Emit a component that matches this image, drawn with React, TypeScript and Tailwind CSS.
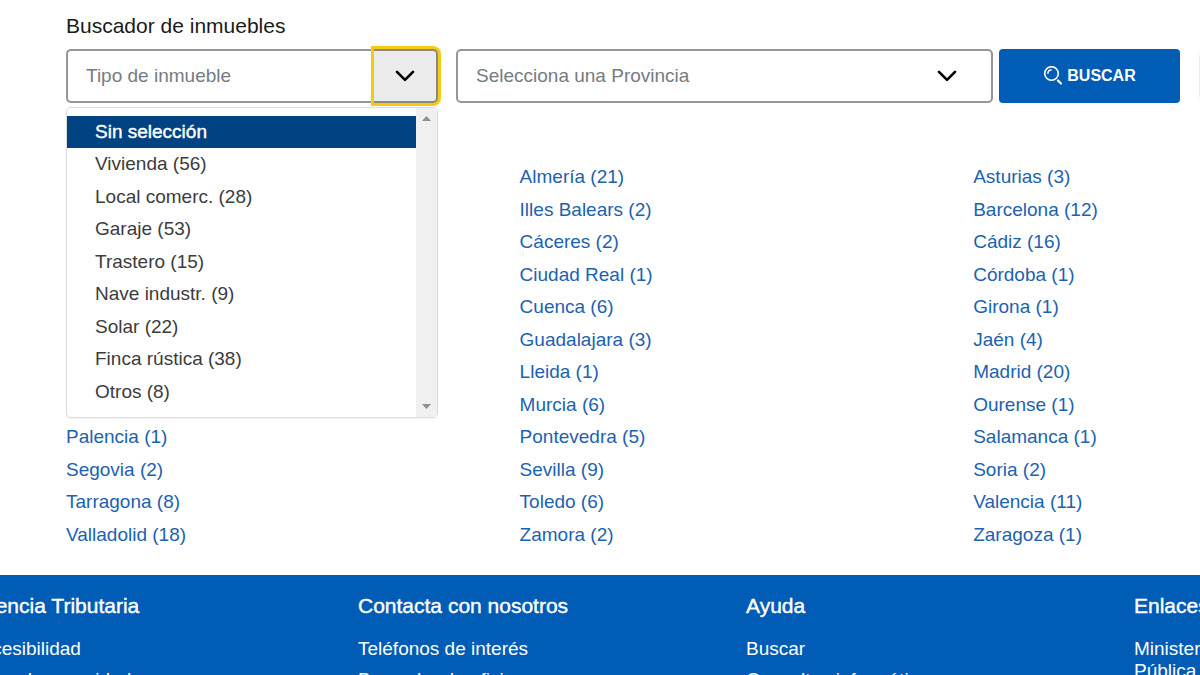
const tipos = [
	"Sin selección",
	"Vivienda (56)",
	"Local comerc. (28)",
	"Garaje (53)",
	"Trastero (15)",
	"Nave industr. (9)",
	"Solar (22)",
	"Finca rústica (38)",
	"Otros (8)",
]

// the first column only fills the rows below the open list
const provincias = [
	{
		className: "grid auto-rows-fr h-[130px] self-end",
		items: ["Palencia (1)", "Segovia (2)", "Tarragona (8)", "Valladolid (18)"],
	},
	{
		className: "grid auto-rows-fr",
		items: [
			"Almería (21)",
			"Illes Balears (2)",
			"Cáceres (2)",
			"Ciudad Real (1)",
			"Cuenca (6)",
			"Guadalajara (3)",
			"Lleida (1)",
			"Murcia (6)",
			"Pontevedra (5)",
			"Sevilla (9)",
			"Toledo (6)",
			"Zamora (2)",
		],
	},
	{
		className: "grid auto-rows-fr",
		items: [
			"Asturias (3)",
			"Barcelona (12)",
			"Cádiz (16)",
			"Córdoba (1)",
			"Girona (1)",
			"Jaén (4)",
			"Madrid (20)",
			"Ourense (1)",
			"Salamanca (1)",
			"Soria (2)",
			"Valencia (11)",
			"Zaragoza (1)",
		],
	},
]

const footer = [
	{ title: "Agencia Tributaria", links: ["Accesibilidad", "Aviso de seguridad"] },
	{ title: "Contacta con nosotros", links: ["Teléfonos de interés", "Buscador de oficinas"] },
	{ title: "Ayuda", links: ["Buscar", "Consultas informáticas"] },
	{ title: "Enlaces", links: ["Ministerio Pública"] },
]

function Chevron() {
	return (
		<svg className="w-5 h-3" viewBox="0 0 20 12" fill="none" stroke="#000" strokeWidth="2.6" strokeLinecap="round" strokeLinejoin="round">
			<path d="M2 1.8l8 8 8-8" />
		</svg>
	)
}

function SearchIcon() {
	return (
		<svg className="w-5 h-5" viewBox="0 0 20 20" fill="none" stroke="currentColor" strokeLinecap="round">
			<circle cx="8.5" cy="7.5" r="6.8" strokeWidth="1.6" />
			<path d="M4.9 7.3a3.6 3.6 0 0 1 3.4-3.4" strokeWidth="1.4" />
			<path d="M15 14.500l3 3" strokeWidth="2.2" />
		</svg>
	)
}

function TipoInmueble() {
	return (
		<div className="relative w-[372px] shrink-0">
			<div className="flex h-[54px]">
				<input
					id="tipo"
					type="text"
					placeholder="Tipo de inmueble"
					className="min-w-0 flex-1 rounded-l-[5px] border-2 border-r-0 border-[#969696] pl-[18px] text-[19px] placeholder:text-[#757b82] outline-none"
				/>
				<button
					type="button"
					aria-label="Mostrar tipos"
					className="flex w-16 items-center justify-center rounded-r-[5px] border-2 border-l-0 border-[#8a8a80] bg-[#ebebeb] ring-3 ring-[#f5c914]"
				>
					<Chevron />
				</button>
			</div>
			<div className="absolute top-full left-0 z-10 mt-1 flex w-full rounded-[5px] border border-[#dcdcdc] bg-white shadow-xs">
				<ul
					role="listbox"
					aria-label="Tipo de inmueble"
					className="grid h-[309px] flex-1 auto-rows-fr pt-2 pb-[9px] text-[19px] text-[#3c3c3c]"
				>
					{tipos.map((tipo, i) => (
						<li
							key={tipo}
							role="option"
							aria-selected={i === 0}
							className="flex items-center pl-7 aria-selected:bg-[#004282] aria-selected:text-white aria-selected:[-webkit-text-stroke:0.4px]"
						>
							{tipo}
						</li>
					))}
				</ul>
				<div className="flex w-[21px] flex-col items-center justify-between bg-[#f0f0f0] py-2">
					<svg className="h-[5px] w-[9px]" viewBox="0 0 9 5" fill="#8f8f8f">
						<path d="M0 5L4.500 0L9 5z" />
					</svg>
					<svg className="h-[5px] w-[9px]" viewBox="0 0 9 5" fill="#8f8f8f">
						<path d="M0 0L4.500 5L9 0z" />
					</svg>
				</div>
			</div>
		</div>
	)
}

export default function App() {
	return (
		<div className="overflow-hidden bg-white font-['Liberation_Sans',Arial,sans-serif]">
			<main className="pt-3 pl-[66px]">
				<label htmlFor="tipo" className="block text-[21px] leading-7 text-[#1a1a1a]">
					Buscador de inmuebles
				</label>
				<form className="mt-[9px] flex">
					<TipoInmueble />
					<div className="relative ml-[18px] flex-1">
						<select
							aria-label="Provincia"
							className="h-[54px] w-full appearance-none rounded-[5px] border-2 border-[#969696] bg-white pl-[18px] text-[19px] text-[#757b82]"
						>
							<option>Selecciona una Provincia</option>
						</select>
						<div className="pointer-events-none absolute inset-y-0 right-9 flex items-center">
							<Chevron />
						</div>
					</div>
					<button
						type="button"
						className="ml-1.5 flex h-[54px] w-[181px] items-center justify-center gap-1 rounded-[4px] bg-[#005cb5] text-[16px] font-bold text-white"
					>
						<SearchIcon />
						BUSCAR
					</button>
					<div className="my-1.5 ml-[19px] w-px bg-[#ececec]" />
				</form>
				<div className="mt-[58px] grid min-h-[390px] grid-cols-[2fr_2fr_1fr] text-[19px] leading-8 text-[#1c62b0]">
					{provincias.map((col, c) => (
						<ul key={c} className={col.className}>
							{col.items.map(item => (
								<li key={item}>
									<a href="#">{item}</a>
								</li>
							))}
						</ul>
					))}
				</div>
			</main>
			<footer className="mt-6 h-[101px] overflow-hidden bg-[#005cb5] pt-[15px] text-white">
				<div className="-ml-[30px] grid grid-cols-[388fr_388fr_388fr_66fr]">
					{footer.map(col => (
						<div key={col.title} className="min-w-0">
							<h2 className="text-[21px] leading-8 [-webkit-text-stroke:0.4px]">{col.title}</h2>
							<ul className="mt-4 flex flex-col gap-[9px] text-[19px] leading-[22px]">
								{col.links.map(link => (
									<li key={link}>
										<a href="#">{link}</a>
									</li>
								))}
							</ul>
						</div>
					))}
				</div>
			</footer>
		</div>
	)
}
